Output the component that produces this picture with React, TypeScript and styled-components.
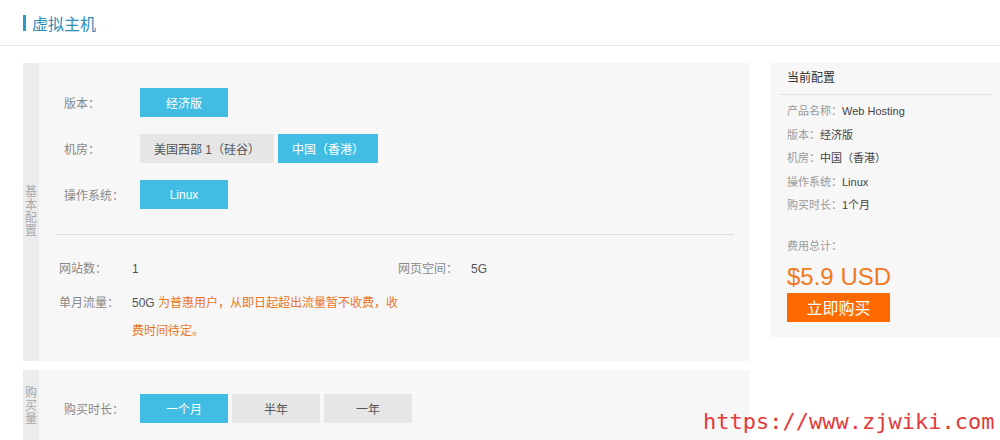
import styled, { createGlobalStyle } from "styled-components"

const GlobalStyle = createGlobalStyle`
  html, body {
    margin: 0;
    padding: 0;
    background: #fff;
    font-family: "Liberation Sans", "Noto Sans CJK SC", sans-serif;
    font-size: 12px;
    color: #333;
  }
`

const Page = styled.div`
  position: relative;
  width: 1000px;
  height: 440px;
  overflow: hidden;
`

const Header = styled.div`
  display: flex;
  align-items: center;
  height: 46px;
  padding: 1px 0 0 23px;
  box-sizing: border-box;
  border-bottom: 1px solid #e8e8e8;
`

const Title = styled.h1`
  margin: 0;
  display: flex;
  align-items: center;
  gap: 6px;
  font-size: 16px;
  font-weight: normal;
  color: #2e8db5;
  &::before {
    content: "";
    width: 3px;
    height: 16px;
    background: #2a9dc6;
  }
`

const Body = styled.div`
  display: flex;
  gap: 20px;
  padding: 17px 0 0 23px;
`

const MainCol = styled.div`
  width: 727px;
  display: flex;
  flex-direction: column;
  gap: 9px;
`

const Panel = styled.section<{ $height?: number }>`
  display: flex;
  background: #f7f7f7;
  min-height: ${({ $height }) => ($height ? `${$height}px` : "auto")};
`

const Strip = styled.div`
  width: 16px;
  flex: none;
  background: #ececec;
  display: flex;
  align-items: center;
  justify-content: center;
`

const StripText = styled.div`
  width: 12px;
  font-size: 12px;
  line-height: 13px;
  color: #aaa;
  text-align: center;
  word-break: break-all;
`

const PanelBody = styled.div`
  flex: 1;
  display: flex;
  flex-direction: column;
`

const OptionList = styled.div<{ $top: number }>`
  display: flex;
  flex-direction: column;
  gap: 17px;
  padding: ${({ $top }) => $top}px 0 0 25px;
`

const OptionRow = styled.div`
  display: flex;
  align-items: center;
  height: 29px;
`

const Label = styled.span<{ $width: number }>`
  width: ${({ $width }) => $width}px;
  flex: none;
  color: #888;
`

const Choices = styled.div`
  display: flex;
  gap: 4px;
`

const Choice = styled.button<{ $active?: boolean; $fixed?: boolean }>`
  height: 29px;
  min-width: 88px;
  ${({ $fixed }) => ($fixed ? "width: 88px; padding: 0;" : "padding: 0 14px;")}
  border: none;
  font-family: inherit;
  font-size: 12px;
  cursor: pointer;
  background: ${({ $active }) => ($active ? "#41bde3" : "#e6e6e6")};
  color: ${({ $active }) => ($active ? "#fff" : "#555")};
`

const Divider = styled.hr`
  margin: 25px 16px 0 17px;
  border: none;
  border-top: 1px solid #dedede;
`

const InfoList = styled.div`
  display: flex;
  flex-direction: column;
  gap: 6px;
  padding: 20px 0 15px 20px;
`

const InfoRow = styled.div`
  display: flex;
  line-height: 28px;
`

const InfoCell = styled.div<{ $width?: number }>`
  display: flex;
  width: ${({ $width }) => ($width ? `${$width}px` : "auto")};
`

const Value = styled.div<{ $width?: number }>`
  color: #555;
  ${({ $width }) => ($width ? `width: ${$width}px;` : "")}
`

const Note = styled.span`
  color: #e8761e;
`

const Sidebar = styled.aside`
  width: 230px;
  height: 274px;
  box-sizing: border-box;
  background: #f7f7f7;
  padding-bottom: 15px;
  display: flex;
  flex-direction: column;
`

const SideTitle = styled.div`
  margin: 0 8px 0 9px;
  padding-left: 8px;
  line-height: 31px;
  border-bottom: 1px solid #e2e2e2;
  color: #333;
`

const SideBody = styled.div`
  padding: 5px 0 0 17px;
  display: flex;
  flex-direction: column;
`

const SideItem = styled.div`
  line-height: 23.5px;
  font-size: 11px;
  color: #999;
  & > b {
    font-weight: normal;
    color: #444;
  }
`

const TotalLabel = styled.div`
  margin-top: 18px;
  line-height: 20px;
  font-size: 11px;
  color: #999;
`

const Price = styled.div`
  margin-top: 7px;
  margin-bottom: 2px;
  font-size: 24px;
  line-height: 28px;
  color: #f07a22;
`

const BuyButton = styled.button`
  width: 103px;
  height: 29px;
  border: none;
  background: #ff6a00;
  color: #fff;
  font-family: inherit;
  font-size: 16px;
  cursor: pointer;
`

const Watermark = styled.div`
  position: absolute;
  left: 703px;
  top: 409px;
  font-family: "DejaVu Sans Mono", monospace;
  font-size: 22px;
  color: #e23b3b;
`

export default function App() {
  return (
    <Page>
      <GlobalStyle />
      <Header>
        <Title>虚拟主机</Title>
      </Header>
      <Body>
        <MainCol>
          <Panel $height={298}>
            <Strip>
              <StripText>基本配置</StripText>
            </Strip>
            <PanelBody>
              <OptionList $top={25}>
                <OptionRow>
                  <Label $width={76}>版本：</Label>
                  <Choices>
                    <Choice $active>经济版</Choice>
                  </Choices>
                </OptionRow>
                <OptionRow>
                  <Label $width={76}>机房：</Label>
                  <Choices>
                    <Choice>美国西部 1（硅谷）</Choice>
                    <Choice $active>中国（香港）</Choice>
                  </Choices>
                </OptionRow>
                <OptionRow>
                  <Label $width={76}>操作系统：</Label>
                  <Choices>
                    <Choice $active>Linux</Choice>
                  </Choices>
                </OptionRow>
              </OptionList>
              <Divider />
              <InfoList>
                <InfoRow>
                  <InfoCell $width={339}>
                    <Label $width={73}>网站数：</Label>
                    <Value>1</Value>
                  </InfoCell>
                  <InfoCell>
                    <Label $width={73}>网页空间：</Label>
                    <Value>5G</Value>
                  </InfoCell>
                </InfoRow>
                <InfoRow>
                  <InfoCell>
                    <Label $width={73}>单月流量：</Label>
                    <Value $width={270}>
                      50G <Note>为普惠用户，从即日起超出流量暂不收费，收费时间待定。</Note>
                    </Value>
                  </InfoCell>
                </InfoRow>
              </InfoList>
            </PanelBody>
          </Panel>
          <Panel $height={72}>
            <Strip>
              <StripText>购买量</StripText>
            </Strip>
            <PanelBody>
              <OptionList $top={24}>
                <OptionRow>
                  <Label $width={76}>购买时长：</Label>
                  <Choices>
                    <Choice $active $fixed>一个月</Choice>
                    <Choice $fixed>半年</Choice>
                    <Choice $fixed>一年</Choice>
                  </Choices>
                </OptionRow>
              </OptionList>
            </PanelBody>
          </Panel>
        </MainCol>
        <Sidebar>
          <SideTitle>当前配置</SideTitle>
          <SideBody>
            <SideItem>产品名称：<b>Web Hosting</b></SideItem>
            <SideItem>版本：<b>经济版</b></SideItem>
            <SideItem>机房：<b>中国（香港）</b></SideItem>
            <SideItem>操作系统：<b>Linux</b></SideItem>
            <SideItem>购买时长：<b>1个月</b></SideItem>
            <TotalLabel>费用总计：</TotalLabel>
            <Price>$5.9 USD</Price>
            <BuyButton>立即购买</BuyButton>
          </SideBody>
        </Sidebar>
      </Body>
      <Watermark>https://www.zjwiki.com</Watermark>
    </Page>
  )
}
